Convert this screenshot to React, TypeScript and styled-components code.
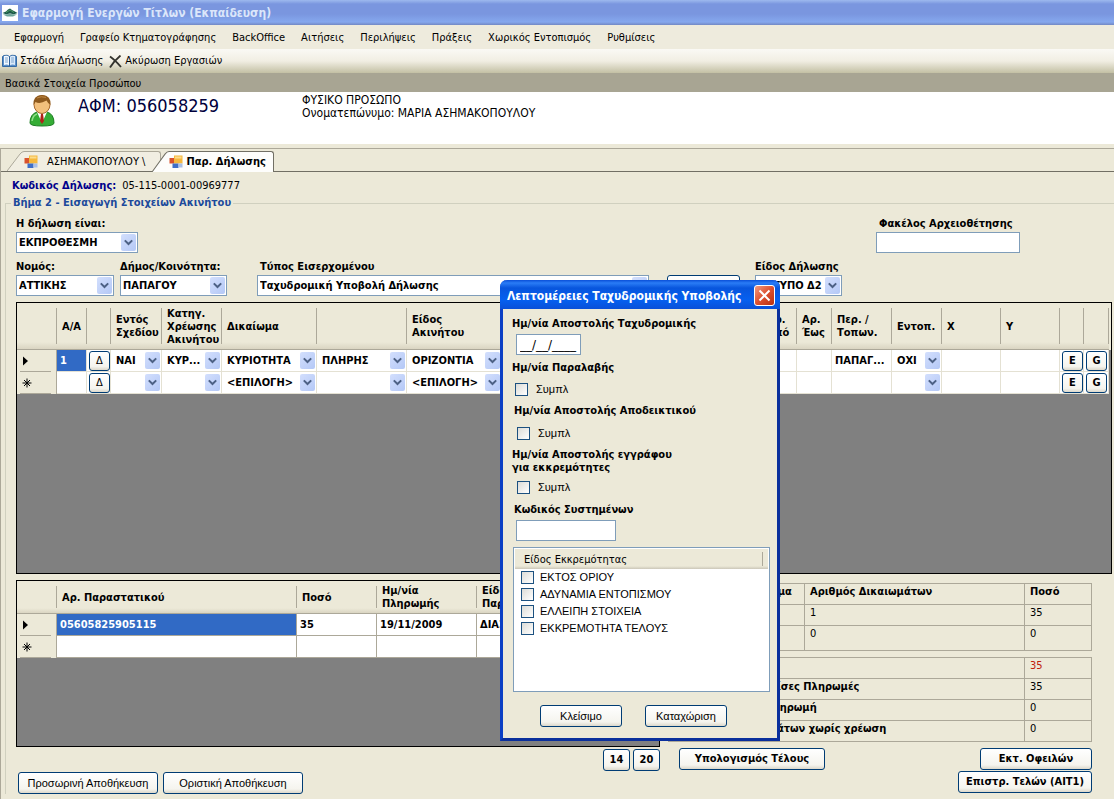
import React from "react";
import styled, { createGlobalStyle, css } from "styled-components";

const tahoma = `"DejaVu Sans Condensed", "DejaVu Sans", sans-serif`;
const sans = `"Liberation Sans", Arial, sans-serif`;

const color = {
  face: "#ece9d8",
  line: "#aca899",
  field: "#7f9db9",
  select: "#316ac5",
  button: "#003c74",
};

const GlobalStyle = createGlobalStyle`
  *, *::before, *::after { box-sizing: border-box; }
  html, body, #root { min-height: 100%; }
  body {
    margin: 0;
    background: ${color.face};
    color: #000;
    font: 11px/14px ${tahoma};
  }
  button, input, select { font: inherit; color: inherit; margin: 0; }
`;

/* ---------- shell ---------- */

const Page = styled.div`
  position: relative;
  min-height: 100vh;
  display: flex;
  flex-direction: column;
  overflow: hidden;
  white-space: nowrap;
`;

const TitleBar = styled.header`
  display: flex;
  align-items: center;
  gap: 4px;
  height: 25px;
  padding-left: 2px;
  background: linear-gradient(#9db9ee 0, #7a96df 4px, #7a96df 14px, #86a8ee 22px, #7288c4 25px);
  color: #dbe6fa;
  font-size: 12px;
  font-weight: bold;
`;

const Heading = styled.h1`
  margin: 0;
  font: inherit;
`;

const MenuBar = styled.nav`
  display: flex;
  align-items: center;
  height: 24px;
  padding: 1px 0 0 14px;
  gap: 16px;
  background: #eeebdd;
`;

const MenuItem = styled.button`
  padding: 0;
  border: 0;
  background: none;
`;

const ToolBar = styled.div`
  display: flex;
  align-items: center;
  gap: 6px;
  height: 24px;
  padding-left: 2px;
  background: linear-gradient(#faf9f5, #f1eee3 50%, #c3c0a4);
`;

const ToolItem = styled.button`
  display: flex;
  align-items: center;
  gap: 3px;
  padding: 0;
  border: 0;
  background: none;
`;

const SectionTitle = styled.h2`
  margin: 0;
  height: 19px;
  padding: 4px 5px 0;
  background: #a8a593;
  font: inherit;
`;

const Person = styled.section`
  display: flex;
  height: 52px;
  padding: 2px 0 0 28px;
  background: #fff;
`;

const TaxNumber = styled.div`
  flex: none;
  width: 246px;
  padding: 2px 0 0 22px;
  color: #00003c;
  font-size: 18px;
  line-height: 20px;
`;

const PersonName = styled.div`
  font-size: 12px;
  line-height: 13px;
`;

/* ---------- tabs ---------- */

const TabPanel = styled.main`
  flex: 1;
  margin-top: 4px;
  border-top: 1px solid ${color.line};
  border-left: 1px solid ${color.line};
`;

const TabStrip = styled.div`
  display: flex;
  align-items: flex-end;
  height: 23px;
  padding-left: 6px;
  border-bottom: 1px solid #716f64;
`;

const TabButton = styled.button<{ $active?: boolean }>`
  display: flex;
  height: 20px;
  padding: 0;
  border: 0;
  background: none;
  ${(p) =>
    p.$active &&
    css`
      position: relative;
      height: 21px;
      margin: 0 0 -1px -9px;
      font-weight: bold;
    `}
`;

const TabFace = styled.span<{ $active?: boolean }>`
  display: flex;
  align-items: center;
  align-self: stretch;
  gap: ${(p) => (p.$active ? 3 : 9)}px;
  padding-right: ${(p) => (p.$active ? 7 : 15)}px;
  border-top: 1px solid ${(p) => (p.$active ? "#716f64" : color.line)};
  border-right: 1px solid ${(p) => (p.$active ? "#716f64" : color.line)};
  border-radius: 0 3px 0 0;
  background: ${(p) => (p.$active ? "#fdfdfb" : "#f1eee2")};
`;

const CodeLine = styled.div`
  display: flex;
  gap: 6px;
  padding: 7px 0 3px 11px;
`;

const CodeLabel = styled.span`
  color: #00008b;
  font-weight: bold;
`;

/* ---------- form ---------- */

const Step = styled.fieldset`
  margin: 0 0 0 4px;
  padding: 6px 2px 0 10px;
  border: 1px solid #d0d0bf;
  border-width: 1px 0 0 1px;
  min-width: 0;
`;

const Legend = styled.legend`
  margin-left: -5px;
  padding: 0 2px;
  color: #1c4a9c;
  font-weight: bold;
`;

const FormRow = styled.div`
  display: flex;
  align-items: flex-end;
  margin-bottom: 6px;
`;

const Field = styled.label<{ $w: number; $gap?: number; $push?: boolean }>`
  display: flex;
  flex-direction: column;
  gap: 1px;
  width: ${(p) => p.$w}px;
  padding-top: 1px;
  margin-left: ${(p) => (p.$push ? "auto" : `${p.$gap ?? 0}px`)};
  margin-right: ${(p) => (p.$push ? 92 : 0)}px;
  font-weight: bold;
`;

const Caption = styled.span<{ $indent?: number }>`
  padding-left: ${(p) => p.$indent ?? 0}px;
`;

const TextBox = styled.input<{ $w?: number }>`
  width: ${(p) => (p.$w ? `${p.$w}px` : "100%")};
  height: 21px;
  padding: 0 3px;
  border: 1px solid ${color.field};
  background: #fff;
  font-family: "DejaVu Sans", sans-serif;
  font-size: 12px;
`;

const ComboFrame = styled.span<{ $plain?: boolean }>`
  display: grid;
  grid-template-columns: 1fr 15px;
  align-items: center;
  height: ${(p) => (p.$plain ? 20 : 21)}px;
  padding: 1px;
  border: ${(p) => (p.$plain ? "0" : `1px solid ${color.field}`)};
  background: #fff;
`;

const ComboSelect = styled.select`
  grid-area: 1 / 1 / 2 / 3;
  width: 100%;
  height: 100%;
  padding: 0 16px 0 1px;
  border: 0;
  border-radius: 0;
  appearance: none;
  background: transparent;
  font-weight: bold;
`;

const ComboArrow = styled.span`
  grid-area: 1 / 2;
  display: flex;
  align-items: center;
  justify-content: center;
  height: 17px;
  border-radius: 2px;
  background: linear-gradient(135deg, #d3dffd, #b4c8f6);
  pointer-events: none;
`;

const Chevron = () => (
  <svg width="9" height="7" viewBox="0 0 9 7" aria-hidden="true">
    <path d="M0.8 1.4 4.5 5 8.2 1.4" fill="none" stroke="#4d6185" strokeWidth="2" />
  </svg>
);

const Combo = ({ value, label, plain }: { value: string; label?: string; plain?: boolean }) => (
  <ComboFrame $plain={plain}>
    <ComboSelect aria-label={label} defaultValue={value}>
      <option>{value}</option>
    </ComboSelect>
    <ComboArrow>
      <Chevron />
    </ComboArrow>
  </ComboFrame>
);

const PushButton = styled.button<{ $w?: number; $bold?: boolean; $h?: number; $sans?: boolean }>`
  flex: none;
  width: ${(p) => (p.$w ? `${p.$w}px` : "auto")};
  height: ${(p) => p.$h ?? 22}px;
  padding: 0;
  border: 1px solid ${color.button};
  border-radius: 3px;
  background: linear-gradient(#fff, #f5f4ee 80%, #dcd8cb);
  font-family: ${(p) => (p.$sans ? sans : tahoma)};
  font-weight: ${(p) => (p.$bold ? "bold" : "normal")};
`;

/* ---------- data grids ---------- */

const GridBox = styled.div<{ $h: number }>`
  min-height: ${(p) => p.$h}px;
  padding-right: 2px;
  border: 1px solid #000;
  background: linear-gradient(${color.face}, ${color.face}) right top / 2px 47px no-repeat #808080;
  overflow: hidden;
`;

const Grid = styled.table<{ $lines: string; $head: number }>`
  width: 100%;
  table-layout: fixed;
  border-collapse: separate;
  border-spacing: 0;
  font-weight: bold;

  thead th {
    height: ${(p) => p.$head}px;
    padding: 0 0 0 5px;
    border-bottom: 1px solid ${color.line};
    background:
      linear-gradient(${color.line}, ${color.line}) right center / 1px calc(100% - 10px) no-repeat,
      linear-gradient(${color.face} 85%, #dad5c2);
    font-weight: bold;
    line-height: 13px;
    text-align: left;
    overflow: hidden;
  }
  tbody td {
    height: 22px;
    padding: 1px 0 0 3px;
    border-right: 1px solid ${(p) => p.$lines};
    border-bottom: 1px solid ${(p) => p.$lines};
    background: #fff;
    overflow: hidden;
  }
`;

const Stub = styled.th`
  height: 22px;
  padding: 0 0 0 5px;
  border-right: 1px solid ${color.line};
  background:
    linear-gradient(${color.line}, ${color.line}) 3px 100% / 31px 1px no-repeat,
    ${color.face};
  line-height: 0;
  text-align: left;
`;

const Picked = styled.td`
  && {
    background: ${color.select};
    color: #fff;
  }
`;

const ComboCell = styled.td`
  && {
    padding: 0;
  }
  ${ComboSelect} {
    padding: 1px 16px 0 4px;
  }
`;

const ButtonCell = styled.td`
  && {
    padding: 0 0 0 2px;
  }
`;

const Current = () => (
  <svg width="8" height="10" viewBox="0 0 8 10" aria-hidden="true">
    <path d="M1 0.5 6 5 1 9.5Z" fill="#000" />
  </svg>
);

const NewRow = () => (
  <svg width="10" height="10" viewBox="0 0 10 10" aria-hidden="true">
    <path d="M5 0.5V9.5M0.5 5H9.5M2 2 8 8M8 2 2 8" stroke="#000" fill="none" />
  </svg>
);

/* ---------- lower area ---------- */

const Lower = styled.div`
  display: grid;
  grid-template-columns: 644px minmax(0, 1fr);
  column-gap: 8px;
  margin-top: 6px;
`;

const Actions = styled.div<{ $end?: boolean; $top: number }>`
  display: flex;
  justify-content: ${(p) => (p.$end ? "flex-end" : "flex-start")};
  gap: ${(p) => (p.$end ? 3 : 5)}px;
  margin-top: ${(p) => p.$top}px;
  padding-left: 2px;
`;

const Totals = styled.div`
  padding: 3px 20px 0 0;
`;

const Summary = styled.table`
  width: 100%;
  margin-bottom: 6px;
  table-layout: fixed;
  border-collapse: collapse;

  th, td {
    height: 21px;
    padding: 1px 5px 0;
    border: 1px solid ${color.line};
    text-align: left;
    vertical-align: top;
  }
  th:first-child {
    padding: 1px 0 0 14px;
  }
`;

const TallRow = styled.tr`
  height: 25px;
`;

const Due = styled.td`
  color: #c0200c;
`;

const TotalsActions = styled.div`
  display: flex;
  justify-content: space-between;
  padding-left: 11px;
`;

const TotalsEnd = styled.div`
  display: flex;
  flex-direction: column;
  align-items: flex-end;
  gap: 1px;
`;

/* ---------- dialog ---------- */

const Dialog = styled.section`
  position: absolute;
  top: 280px;
  left: 500px;
  width: 280px;
  border: 3px solid #0b3fc4;
  border-top: 0;
  border-radius: 7px 7px 0 0;
  border-right-color: #0a2f9c;
  border-bottom-color: #0a2f9c;
  background: ${color.face};
`;

const DialogTitle = styled.header`
  display: flex;
  align-items: center;
  justify-content: space-between;
  height: 29px;
  margin: 0 -3px;
  padding: 2px 5px 0 7px;
  border-radius: 7px 7px 0 0;
  background: linear-gradient(#0a4fd8 0, #2a7cf6 3px, #0855dd 8px, #0560f0 20px, #0a50d8 29px);
  color: #fff;
  font-size: 12px;
  font-weight: bold;
`;

const CloseButton = styled.button`
  display: flex;
  align-items: center;
  justify-content: center;
  width: 21px;
  height: 21px;
  padding: 0;
  border: 1px solid #fff;
  border-radius: 3px;
  background: linear-gradient(135deg, #f09a80, #dd5030 50%, #b83010);
`;

const DialogBody = styled.div`
  display: flex;
  flex-direction: column;
  align-items: flex-start;
  padding: 8px 7px 11px 9px;
`;

const DialogLabel = styled.label<{ $in?: boolean }>`
  padding-left: ${(p) => (p.$in ? 2 : 0)}px;
  font-weight: bold;
  line-height: 13px;
`;

const Slot = styled.div<{ $top: number; $bottom: number; $left: number }>`
  padding: ${(p) => `${p.$top}px 0 ${p.$bottom}px ${p.$left}px`};
  line-height: 0;
`;

const CheckLabel = styled.label<{ $gap: number }>`
  display: flex;
  align-items: center;
  gap: ${(p) => p.$gap}px;
  font-family: ${sans};
  font-size: 11px;
  line-height: 17px;
`;

const Check = styled.input`
  flex: none;
  width: 13px;
  height: 13px;
  appearance: none;
  border: 1px solid #1c5180;
  background: linear-gradient(135deg, #dcdcd7, #fff);
`;

const PendingList = styled.div`
  align-self: stretch;
  height: 145px;
  margin-left: 1px;
  padding: 1px;
  border: 1px solid ${color.field};
  background: #fff;
`;

const PendingHead = styled.div`
  height: 20px;
  padding: 4px 0 0 9px;
  background:
    linear-gradient(${color.line}, ${color.line}) calc(100% - 5px) center / 1px 14px no-repeat,
    linear-gradient(${color.face} 85%, #cbc7b8);
  font-size: 11px;
`;

const PendingItem = styled.div`
  padding-left: 6px;
`;

const DialogActions = styled.div`
  display: flex;
  gap: 23px;
  margin-top: 13px;
  padding-left: 28px;
`;

/* ---------- icons ---------- */

const AppIcon = () => (
  <svg width="16" height="16" viewBox="0 0 16 16" aria-hidden="true">
    <rect width="16" height="16" fill="#fff" />
    <path d="M0.5 8 4 6.5 6 4.5 8 3.5 10 5 12 6 15.5 8 12 9.2 8 8.6 4 9.2Z" fill="#1c5a4a" />
    <path d="M1 9.5Q8 8.5 15 9.5L11 11.5H5Z" fill="#6fa59a" />
    <path d="M4 7.5 8 5 12 7.5" stroke="#4f9a63" fill="none" />
  </svg>
);

const BookIcon = () => (
  <svg width="15" height="14" viewBox="0 0 15 14" aria-hidden="true">
    <path d="M0.5 2.5 2 1.5Q5.5 0.5 7.5 2.5Q9.5 0.5 13 1.5L14.5 2.5V12.5H0.5Z" fill="#5b8fc9" stroke="#356aa5" />
    <path d="M2 2Q5.5 1 7.3 3V11.5Q5 10 2 11Z" fill="#f4f9ff" />
    <path d="M13 2Q9.5 1 7.7 3V11.5Q10 10 13 11Z" fill="#dbeafa" />
    <path d="M3 4H6M3 6H6M3 8H6M9 4H12M9 6H12M9 8H12" stroke="#7fa6cf" />
    <path d="M7.5 2.5V12" stroke="#2f5f96" />
  </svg>
);

const CancelIcon = () => (
  <svg width="13" height="13" viewBox="0 0 13 13" aria-hidden="true">
    <path d="M1 1.5Q6 5 12 12M11.5 0.5Q5 6 1 12.5" stroke="#33332e" strokeWidth="1.8" fill="none" />
  </svg>
);

const PersonIcon = () => (
  <svg width="28" height="33" viewBox="0 0 28 33" aria-hidden="true">
    <path d="M2 29Q2 20 9 18L14 17 19 18Q26 20 26 29Q26 32 14 32Q2 32 2 29Z" fill="#35ad35" stroke="#1c7d22" />
    <path d="M4 27Q5 21 9 20" stroke="#8fe08a" strokeWidth="1.5" fill="none" />
    <path d="M9 18 14 29 19 18Z" fill="#fff" />
    <path d="M13 20H15L16 27 14 30 12 27Z" fill="#b02318" />
    <ellipse cx="14" cy="10.5" rx="8" ry="9" fill="#f3c07c" stroke="#a8682a" />
    <path d="M5.6 11Q4.5 1.5 14 1Q23.5 1.5 22.4 11Q20 9.5 18.5 6.5Q12 10.5 7.5 8Z" fill="#8f5a1e" />
    <path d="M9 4Q13 1.8 18 3.4" stroke="#c08a45" fill="none" />
  </svg>
);

const FormIcon = () => (
  <svg width="14" height="14" viewBox="0 0 14 14" aria-hidden="true">
    <rect x="5" y="0.5" width="8.5" height="8" fill="#f6b83c" />
    <rect x="6" y="1.5" width="6.5" height="2" fill="#fbdc8c" />
    <rect x="0.5" y="3" width="4.5" height="5.5" fill="#d9532c" />
    <rect x="3.5" y="8.5" width="6" height="4.5" fill="#3f6fc8" />
    <rect x="9.5" y="8.5" width="4" height="4" fill="#a9c0e8" />
  </svg>
);

const Slant = ({ active }: { active?: boolean }) => (
  <svg width="17" height="100%" viewBox="0 0 17 20" preserveAspectRatio="none" aria-hidden="true">
    <path
      d="M0 20 13 3Q15 0.5 17 0.5V20Z"
      fill={active ? "#fdfdfb" : "#f1eee2"}
    />
    <path d="M0 20 13 3Q15 0.5 17 0.5" fill="none" stroke={active ? "#716f64" : color.line} />
  </svg>
);

const menu = [
  "Εφαρμογή",
  "Γραφείο Κτηματογράφησης",
  "BackOffice",
  "Αιτήσεις",
  "Περιλήψεις",
  "Πράξεις",
  "Χωρικός Εντοπισμός",
  "Ρυθμίσεις",
];

const pending = ["ΕΚΤΟΣ ΟΡΙΟΥ", "ΑΔΥΝΑΜΙΑ ΕΝΤΟΠΙΣΜΟΥ", "ΕΛΛΕΙΠΗ ΣΤΟΙΧΕΙΑ", "ΕΚΚΡΕΜΟΤΗΤΑ ΤΕΛΟΥΣ"];

const rightsColumns: (number | undefined)[] = [
  40, 30, 24, 51, 60, 95, 90, 95, undefined, 35, 35, 60, 50, 59, 59, 24, 25,
];

type RightsRow = {
  current?: boolean;
  number?: string;
  inPlan: string;
  category: string;
  right: string;
  kind: string;
  property: string;
  place: string;
  located: string;
};

const rights: RightsRow[] = [
  {
    current: true,
    number: "1",
    inPlan: "ΝΑΙ",
    category: "ΚΥΡ...",
    right: "ΚΥΡΙΟΤΗΤΑ",
    kind: "ΠΛΗΡΗΣ",
    property: "ΟΡΙΖΟΝΤΙΑ",
    place: "ΠΑΠΑΓ...",
    located: "ΟΧΙ",
  },
  {
    inPlan: "",
    category: "",
    right: "<ΕΠΙΛΟΓΗ>",
    kind: "",
    property: "<ΕΠΙΛΟΓΗ>",
    place: "",
    located: "",
  },
];

const RightsGrid = () => (
  <GridBox $h={272}>
    <Grid $lines="#e4e1d3" $head={47}>
      <colgroup>
        {rightsColumns.map((w, i) => (
          <col key={i} style={{ width: w }} />
        ))}
      </colgroup>
      <thead>
        <tr>
          <th />
          <th>Α/Α</th>
          <th />
          <th>Εντός<br />Σχεδίου</th>
          <th>Κατηγ.<br />Χρέωσης<br />Ακινήτου</th>
          <th>Δικαίωμα</th>
          <th />
          <th>Είδος<br />Ακινήτου</th>
          <th />
          <th>Αρ.<br />Από</th>
          <th>Αρ.<br />Έως</th>
          <th>Περ. /<br />Τοπων.</th>
          <th>Εντοπ.</th>
          <th>Χ</th>
          <th>Υ</th>
          <th />
          <th />
        </tr>
      </thead>
      <tbody>
        {rights.map((r, i) => (
          <tr key={i}>
            <Stub scope="row">{r.current ? <Current /> : <NewRow />}</Stub>
            {r.current ? <Picked>{r.number}</Picked> : <td />}
            <ButtonCell>
              <PushButton $w={21} $h={20}>Δ</PushButton>
            </ButtonCell>
            <ComboCell><Combo plain label="Εντός Σχεδίου" value={r.inPlan} /></ComboCell>
            <ComboCell><Combo plain label="Κατηγ. Χρέωσης" value={r.category} /></ComboCell>
            <ComboCell><Combo plain label="Δικαίωμα" value={r.right} /></ComboCell>
            <ComboCell><Combo plain label="Είδος Δικαιώματος" value={r.kind} /></ComboCell>
            <ComboCell><Combo plain label="Είδος Ακινήτου" value={r.property} /></ComboCell>
            <td />
            <td />
            <td />
            <td>{r.place}</td>
            <ComboCell><Combo plain label="Εντοπ." value={r.located} /></ComboCell>
            <td />
            <td />
            <ButtonCell><PushButton $w={21} $h={20} $bold>E</PushButton></ButtonCell>
            <ButtonCell><PushButton $w={21} $h={20} $bold>G</PushButton></ButtonCell>
          </tr>
        ))}
      </tbody>
    </Grid>
  </GridBox>
);

const PaymentsGrid = () => (
  <GridBox $h={167}>
    <Grid $lines={color.line} $head={33}>
      <colgroup>
        <col style={{ width: 40 }} />
        <col style={{ width: 240 }} />
        <col style={{ width: 80 }} />
        <col style={{ width: 100 }} />
        <col />
      </colgroup>
      <thead>
        <tr>
          <th />
          <th>Αρ. Παραστατικού</th>
          <th>Ποσό</th>
          <th>Ημ/νία<br />Πληρωμής</th>
          <th>Είδος<br />Παραστατικού</th>
        </tr>
      </thead>
      <tbody>
        <tr>
          <Stub scope="row"><Current /></Stub>
          <Picked>05605825905115</Picked>
          <td>35</td>
          <td>19/11/2009</td>
          <td>ΔΙΑΣ</td>
        </tr>
        <tr>
          <Stub scope="row"><NewRow /></Stub>
          <td />
          <td />
          <td />
          <td />
        </tr>
      </tbody>
    </Grid>
  </GridBox>
);

const SummaryTables = () => (
  <>
    <Summary>
      <colgroup>
        <col style={{ width: 136 }} />
        <col />
        <col style={{ width: 67 }} />
      </colgroup>
      <thead>
        <tr>
          <th>Εμπράγμ. Δικαίωμα</th>
          <th>Αριθμός Δικαιωμάτων</th>
          <th>Ποσό</th>
        </tr>
      </thead>
      <tbody>
        <tr><td /><td>1</td><td>35</td></tr>
        <TallRow><td /><td>0</td><td>0</td></TallRow>
      </tbody>
    </Summary>
    <Summary>
      <colgroup>
        <col />
        <col style={{ width: 67 }} />
      </colgroup>
      <tbody>
        <tr><th>Σύνολο</th><Due>35</Due></tr>
        <tr><th>Πραγματοποιηθείσες Πληρωμές</th><td>35</td></tr>
        <tr><th>Υπολειπόμενη Πληρωμή</th><td>0</td></tr>
        <tr><th>Αριθμός Δικαιωμάτων χωρίς χρέωση</th><td>0</td></tr>
      </tbody>
    </Summary>
  </>
);

const Tick = ({ id, children, gap = 8 }: { id: string; children: string; gap?: number }) => (
  <CheckLabel $gap={gap}>
    <Check type="checkbox" id={id} />
    {children}
  </CheckLabel>
);

const PostalDialog = () => (
  <Dialog role="dialog" aria-labelledby="postal-title">
    <DialogTitle>
      <span id="postal-title">Λεπτομέρειες Ταχυδρομικής Υποβολής</span>
      <CloseButton aria-label="Κλείσιμο παραθύρου">
        <svg width="13" height="13" viewBox="0 0 13 13" aria-hidden="true">
          <path d="M1.5 1.5 11.5 11.5M11.5 1.5 1.5 11.5" stroke="#fff" strokeWidth="2" />
        </svg>
      </CloseButton>
    </DialogTitle>
    <DialogBody>
      <DialogLabel htmlFor="sent">Ημ/νία Αποστολής Ταχυδρομικής</DialogLabel>
      <Slot $top={4} $bottom={6} $left={4}>
        <TextBox id="sent" $w={65} defaultValue="__/__/____" />
      </Slot>
      <DialogLabel htmlFor="received">Ημ/νία Παραλαβής</DialogLabel>
      <Slot $top={7} $bottom={6} $left={3}>
        <Tick id="received">Συμπλ</Tick>
      </Slot>
      <DialogLabel $in htmlFor="proof">Ημ/νία Αποστολής Αποδεικτικού</DialogLabel>
      <Slot $top={8} $bottom={6} $left={5}>
        <Tick id="proof">Συμπλ</Tick>
      </Slot>
      <DialogLabel htmlFor="notice">
        Ημ/νία Αποστολής εγγράφου
        <br />
        για εκκρεμότητες
      </DialogLabel>
      <Slot $top={5} $bottom={7} $left={5}>
        <Tick id="notice">Συμπλ</Tick>
      </Slot>
      <DialogLabel $in htmlFor="system-code">Κωδικός Συστημένων</DialogLabel>
      <Slot $top={4} $bottom={6} $left={4}>
        <TextBox id="system-code" $w={100} />
      </Slot>
      <PendingList>
        <PendingHead>Είδος Εκκρεμότητας</PendingHead>
        {pending.map((text, i) => (
          <PendingItem key={text}>
            <Tick id={`pending-${i}`} gap={6}>{text}</Tick>
          </PendingItem>
        ))}
      </PendingList>
      <DialogActions>
        <PushButton $w={82} $sans>Κλείσιμο</PushButton>
        <PushButton $w={82} $sans>Καταχώριση</PushButton>
      </DialogActions>
    </DialogBody>
  </Dialog>
);

export default function App() {
  return (
    <Page>
      <GlobalStyle />
      <TitleBar>
        <AppIcon />
        <Heading>Εφαρμογή Ενεργών Τίτλων (Εκπαίδευση)</Heading>
      </TitleBar>
      <MenuBar>
        {menu.map((m) => (
          <MenuItem key={m}>{m}</MenuItem>
        ))}
      </MenuBar>
      <ToolBar>
        <ToolItem><BookIcon />Στάδια Δήλωσης</ToolItem>
        <ToolItem><CancelIcon />Ακύρωση Εργασιών</ToolItem>
      </ToolBar>
      <SectionTitle>Βασικά Στοιχεία Προσώπου</SectionTitle>
      <Person>
        <PersonIcon />
        <TaxNumber>ΑΦΜ: 056058259</TaxNumber>
        <PersonName>
          <div>ΦΥΣΙΚΟ ΠΡΟΣΩΠΟ</div>
          <div>Ονοματεπώνυμο: ΜΑΡΙΑ ΑΣΗΜΑΚΟΠΟΥΛΟΥ</div>
        </PersonName>
      </Person>

      <TabPanel>
        <TabStrip role="tablist">
          <TabButton role="tab">
            <Slant />
            <TabFace><FormIcon />ΑΣΗΜΑΚΟΠΟΥΛΟΥ \</TabFace>
          </TabButton>
          <TabButton role="tab" aria-selected $active>
            <Slant active />
            <TabFace $active><FormIcon />Παρ. Δήλωσης</TabFace>
          </TabButton>
        </TabStrip>
        <CodeLine>
          <CodeLabel>Κωδικός Δήλωσης:</CodeLabel>
          <span>05-115-0001-00969777</span>
        </CodeLine>

        <Step>
          <Legend>Βήμα 2 - Εισαγωγή Στοιχείων Ακινήτου</Legend>
          <FormRow>
            <Field $w={122}>
              <Caption>Η δήλωση είναι:</Caption>
              <Combo value="ΕΚΠΡΟΘΕΣΜΗ" />
            </Field>
            <Field $w={144} $push>
              <Caption $indent={3}>Φακέλος Αρχειοθέτησης</Caption>
              <TextBox />
            </Field>
          </FormRow>
          <FormRow>
            <Field $w={98}>
              <Caption>Νομός:</Caption>
              <Combo value="ΑΤΤΙΚΗΣ" />
            </Field>
            <Field $w={107} $gap={6}>
              <Caption>Δήμος/Κοινότητα:</Caption>
              <Combo value="ΠΑΠΑΓΟΥ" />
            </Field>
            <Field $w={392} $gap={30}>
              <Caption $indent={3}>Τύπος Εισερχομένου</Caption>
              <Combo value="Ταχυδρομική Υποβολή Δήλωσης" />
            </Field>
            <Field as="div" $w={73} $gap={18}>
              <PushButton $w={73} $h={21} aria-label="Αναζήτηση" />
            </Field>
            <Field $w={87} $gap={15}>
              <Caption>Είδος Δήλωσης</Caption>
              <Combo value="ΕΝΤΥΠΟ Δ2" />
            </Field>
          </FormRow>

          <RightsGrid />

          <Lower>
            <div>
              <PaymentsGrid />
              <Actions $end $top={2}>
                <PushButton $w={27} $bold>14</PushButton>
                <PushButton $w={27} $bold>20</PushButton>
              </Actions>
              <Actions $top={1}>
                <PushButton $w={140} $sans>Προσωρινή Αποθήκευση</PushButton>
                <PushButton $w={140} $sans>Οριστική Αποθήκευση</PushButton>
              </Actions>
            </div>
            <Totals>
              <SummaryTables />
              <TotalsActions>
                <PushButton $w={146} $bold>Υπολογισμός Τέλους</PushButton>
                <TotalsEnd>
                  <PushButton $w={112} $bold>Εκτ. Οφειλών</PushButton>
                  <PushButton $w={134} $bold>Επιστρ. Τελών (ΑΙΤ1)</PushButton>
                </TotalsEnd>
              </TotalsActions>
            </Totals>
          </Lower>
        </Step>
      </TabPanel>

      <PostalDialog />
    </Page>
  );
}
